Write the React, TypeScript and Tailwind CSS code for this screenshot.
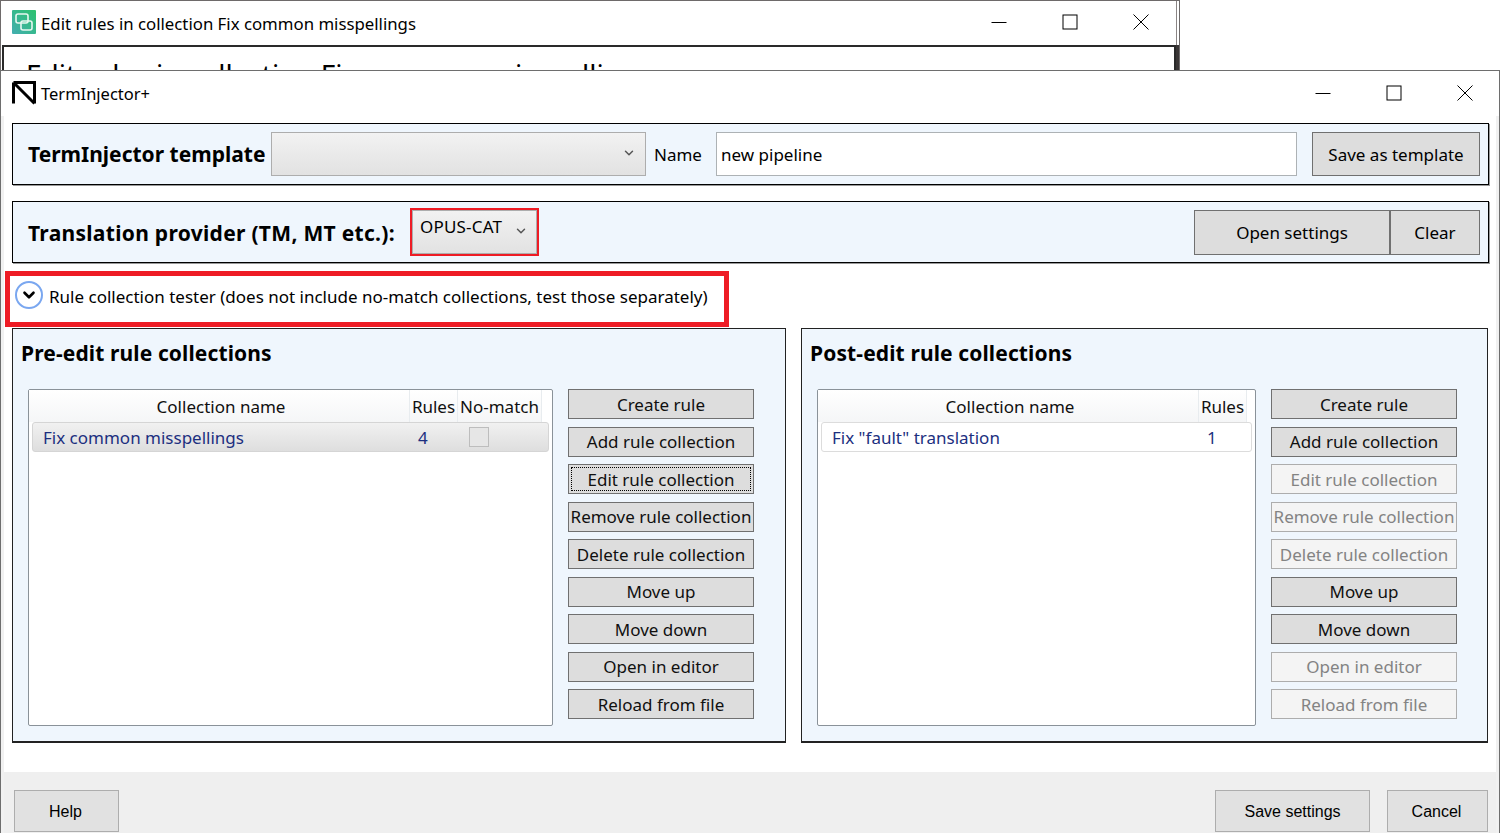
import { ChevronDown } from 'lucide-react'

const leftButtons = [
  { label: 'Create rule' },
  { label: 'Add rule collection' },
  { label: 'Edit rule collection', focused: true },
  { label: 'Remove rule collection' },
  { label: 'Delete rule collection' },
  { label: 'Move up' },
  { label: 'Move down' },
  { label: 'Open in editor' },
  { label: 'Reload from file' },
]

const rightButtons = [
  { label: 'Create rule' },
  { label: 'Add rule collection' },
  { label: 'Edit rule collection', disabled: true },
  { label: 'Remove rule collection', disabled: true },
  { label: 'Delete rule collection', disabled: true },
  { label: 'Move up' },
  { label: 'Move down' },
  { label: 'Open in editor', disabled: true },
  { label: 'Reload from file', disabled: true },
]

function WindowControls({ offset }: { offset: string }) {
  return (
    <div className={`-mt-[2px] flex items-center ${offset}`}>
      <svg width="16" height="16" viewBox="0 0 16 16" className="mr-[55px]">
        <path d="M0.5 8.5H15.5" stroke="#000" strokeWidth="1" />
      </svg>
      <svg width="16" height="16" viewBox="0 0 16 16" className="mr-[55px]">
        <rect x="1" y="1" width="14" height="14" fill="none" stroke="#000" strokeWidth="1" />
      </svg>
      <svg width="16" height="16" viewBox="0 0 16 16">
        <path d="M0.5 0.5L15.5 15.5M15.5 0.5L0.5 15.5" stroke="#000" strokeWidth="1" />
      </svg>
    </div>
  )
}

function SideButton({ label, disabled, focused }: { label: string; disabled?: boolean; focused?: boolean }) {
  return (
    <div
      className={`relative flex h-[30px] w-[186px] items-center justify-center whitespace-nowrap border pt-[1px] text-[17px] ${
        disabled ? 'border-[#adadad] bg-[#f4f4f4] text-[#838383]' : 'border-[#707070] bg-[#dddddd] text-[#101010]'
      }`}
    >
      {focused && <span className="absolute inset-[2px] border border-dotted border-black" />}
      {label}
    </div>
  )
}

function CollectionPanel({
  title,
  width,
  listWidth,
  buttons,
  children,
}: {
  title: string
  width: string
  listWidth: string
  buttons: { label: string; disabled?: boolean; focused?: boolean }[]
  children: React.ReactNode
}) {
  return (
    <section className={`h-[415px] ${width} border border-b-2 border-[#222] bg-[#eff6fd] pl-2 pt-[9px]`}>
      <h2 className="h-[51px] text-[21px] font-bold leading-[30px] tracking-[0.12px] text-black">{title}</h2>
      <div className="flex gap-[15px] pl-[7px]">
        <div className={`h-[337px] ${listWidth} rounded-[2px] border border-[#8a9299] bg-white`}>{children}</div>
        <div className="flex flex-col gap-[7.5px]">
          {buttons.map((b) => (
            <SideButton key={b.label} {...b} />
          ))}
        </div>
      </div>
    </section>
  )
}

function HeaderCell({ label, className }: { label: string; className: string }) {
  return (
    <div className={`flex h-full items-center justify-center border-r border-[#e8ecef] bg-gradient-to-b from-white to-[#f5f6f7] pt-[1px] text-[17px] text-[#101010] ${className}`}>
      {label}
    </div>
  )
}

function FooterButton({ label, className }: { label: string; className: string }) {
  return (
    <div className={`flex h-[42px] items-center justify-center border border-[#adadad] bg-[#e1e1e1] pt-[1px] font-['Liberation_Sans',sans-serif] text-[16px] text-black ${className}`}>
      {label}
    </div>
  )
}

export default function App() {
  return (
    <div className="relative h-[833px] w-[1500px] overflow-hidden bg-white font-['Noto_Sans',sans-serif] text-black">
      {/* window behind */}
      <div className="absolute left-0 top-0 h-[70px] w-[1180px] border-l border-t border-r border-[#6e6a6a]">
        <div className="mr-[2px] flex h-[44px] items-center justify-between border-r border-[#8a8585]">
          <div className="flex items-center">
            <svg width="24" height="24" viewBox="0 0 24 24" className="-mt-[2px] ml-[11px] mr-[5px]">
              <defs>
                <linearGradient id="appicon" x1="1" y1="0" x2="0" y2="1">
                  <stop offset="0" stopColor="#2cc26e" />
                  <stop offset="1" stopColor="#43aeb0" />
                </linearGradient>
              </defs>
              <rect width="24" height="24" rx="1" fill="url(#appicon)" />
              <rect x="4" y="4" width="12" height="9" rx="2" fill="none" stroke="#e6f7f0" strokeWidth="1.6" />
              <rect x="9" y="11" width="11" height="9" rx="2" fill="none" stroke="#e6f7f0" strokeWidth="1.6" />
            </svg>
            <span className="pt-[1px] text-[16.8px]">Edit rules in collection Fix common misspellings</span>
          </div>
          <WindowControls offset="mr-[27px]" />
        </div>
        <div className="flex h-[30px]">
          <div className="ml-[1px] flex-1 overflow-hidden whitespace-nowrap border-x-2 border-t-2 border-[#2a2a2a] pl-[22px] pt-[9px] text-[28px] leading-[36px]">
            Edit rules in collection Fix common misspellings
          </div>
          <div className="w-[3px] bg-[#3a3636]" />
        </div>
      </div>

      {/* main window */}
      <div className="absolute left-0 top-[70px] flex h-[763px] w-[1500px] flex-col border-x border-t border-[#6e6e6e] bg-white">
        <div className="flex h-[45px] shrink-0 items-center justify-between">
          <div className="flex items-center">
            <svg width="24" height="24" viewBox="0 0 24 24" className="-mt-[2px] ml-[11px] mr-[5px]">
              <path d="M1.5 1.5H22.5V22.5M1.5 1.5V22.5M1.5 1.5L22.5 22.5" fill="none" stroke="#000" strokeWidth="3" />
            </svg>
            <span className="pt-[1px] text-[16.5px]">TermInjector+</span>
          </div>
          <WindowControls offset="mr-[26px]" />
        </div>

        <div className="flex flex-1 flex-col border-x-[3px] border-[#f1f1f1] pl-[8px] pt-[7px]">
          <section className="flex h-[62px] w-[1477px] shrink-0 items-center border border-black bg-[#eff6fd] pl-[15px] shadow-[1px_1px_0_#999]">
            <span className="w-[243px] pt-[2px] text-[21px] font-bold">TermInjector template</span>
            <div className="flex h-[44px] w-[375px] items-center justify-end border border-[#adadad] bg-gradient-to-b from-[#f2f2f2] to-[#e2e2e2] pb-[2px] pr-[9px]">
              <ChevronDown className="h-[14px] w-[14px] text-[#555]" strokeWidth={2.5} />
            </div>
            <span className="ml-2 w-[62px] pt-[1px] text-[17px]">Name</span>
            <div className="flex h-[44px] w-[581px] items-center border border-[#adb2b5] bg-white pl-1 pt-[1px] text-[17px]">new pipeline</div>
            <div className="ml-[15px] flex h-[44px] w-[168px] items-center justify-center border border-[#707070] bg-[#dddddd] pt-[1px] text-[17px]">Save as template</div>
          </section>

          <section className="mt-[16px] flex h-[62px] w-[1477px] shrink-0 items-center border border-black bg-[#eff6fd] pl-[15px] pr-[8px] shadow-[1px_1px_0_#999]">
            <span className="w-[382px] pt-[3px] text-[21px] font-bold tracking-[0.3px]">Translation provider (TM, MT etc.):</span>
            <div className="flex h-[48px] w-[129px] items-start justify-between border-2 border-[#ee1c25] bg-gradient-to-b from-[#f2f2f2] to-[#e2e2e2] pl-[8px] pr-[9px] pt-[4px] text-[17px] tracking-[0.2px] shadow-[inset_0_0_0_1px_#adadad]">
              OPUS-CAT
              <ChevronDown className="mt-[10px] h-[14px] w-[14px] text-[#555]" strokeWidth={2.5} />
            </div>
            <div className="ml-auto flex">
              <div className="flex h-[45px] w-[196px] items-center justify-center border border-[#707070] bg-[#dddddd] pt-[1px] text-[17px]">Open settings</div>
              <div className="flex h-[45px] w-[90px] items-center justify-center border border-[#707070] bg-[#dddddd] pt-[1px] text-[17px]">Clear</div>
            </div>
          </section>

          <div className="-ml-[7px] mt-2 flex h-[56px] w-[724px] shrink-0 items-center border-[5px] border-[#ee1c25] pb-[4px] pl-[5px] text-[17px]">
            <span className="-mt-[4px] mr-[6px] flex h-[28px] w-[28px] items-center justify-center rounded-full border-2 border-[#7aa7f0] bg-white">
              <ChevronDown className="h-[18px] w-[18px]" strokeWidth={3.5} />
            </span>
            Rule collection tester (does not include no-match collections, test those separately)
          </div>

          <div className="mt-[1px] flex gap-[15px]">
            <CollectionPanel title="Pre-edit rule collections" width="w-[774px]" listWidth="w-[525px]" buttons={leftButtons}>
              <div className="flex h-[32px] items-stretch">
                <HeaderCell label="Collection name" className="w-[381px] pl-[4px]" />
                <HeaderCell label="Rules" className="w-[48px]" />
                <HeaderCell label="No-match" className="w-[84px]" />
              </div>
              <div className="mx-[3px] flex h-[30px] items-center rounded-[3px] border border-[#d5d5d5] bg-gradient-to-b from-[#f1f1f1] to-[#dedede] pt-[1px] text-[17px] text-[#1c2f80]">
                <span className="w-[376px] pl-[10px]">Fix common misspellings</span>
                <span className="w-[60px] pl-[9px]">4</span>
                <span className="-mt-[1px] h-[20px] w-[20px] border border-[#bdbdbd] bg-[#e6e6e6]" />
              </div>
            </CollectionPanel>
            <CollectionPanel title="Post-edit rule collections" width="w-[687px]" listWidth="w-[439px]" buttons={rightButtons}>
              <div className="flex h-[32px] items-stretch">
                <HeaderCell label="Collection name" className="w-[381px] pl-[4px]" />
                <HeaderCell label="Rules" className="w-[48px]" />
              </div>
              <div className="mx-[3px] flex h-[30px] items-center rounded-[3px] border border-[#dcdcdc] bg-white pt-[1px] text-[17px] text-[#1c2f80]">
                <span className="w-[376px] pl-[10px]">Fix "fault" translation</span>
                <span className="pl-[9px]">1</span>
              </div>
            </CollectionPanel>
          </div>

          <footer className="-ml-[8px] mt-auto flex h-[61px] shrink-0 items-start bg-[#efefef] pl-[10px] pr-[8px] pt-[18px]">
            <FooterButton label="Help" className="w-[105px] pr-[2px]" />
            <FooterButton label="Save settings" className="ml-auto w-[155px]" />
            <FooterButton label="Cancel" className="ml-[17px] w-[101px] pr-[2px]" />
          </footer>
        </div>
      </div>
    </div>
  )
}
